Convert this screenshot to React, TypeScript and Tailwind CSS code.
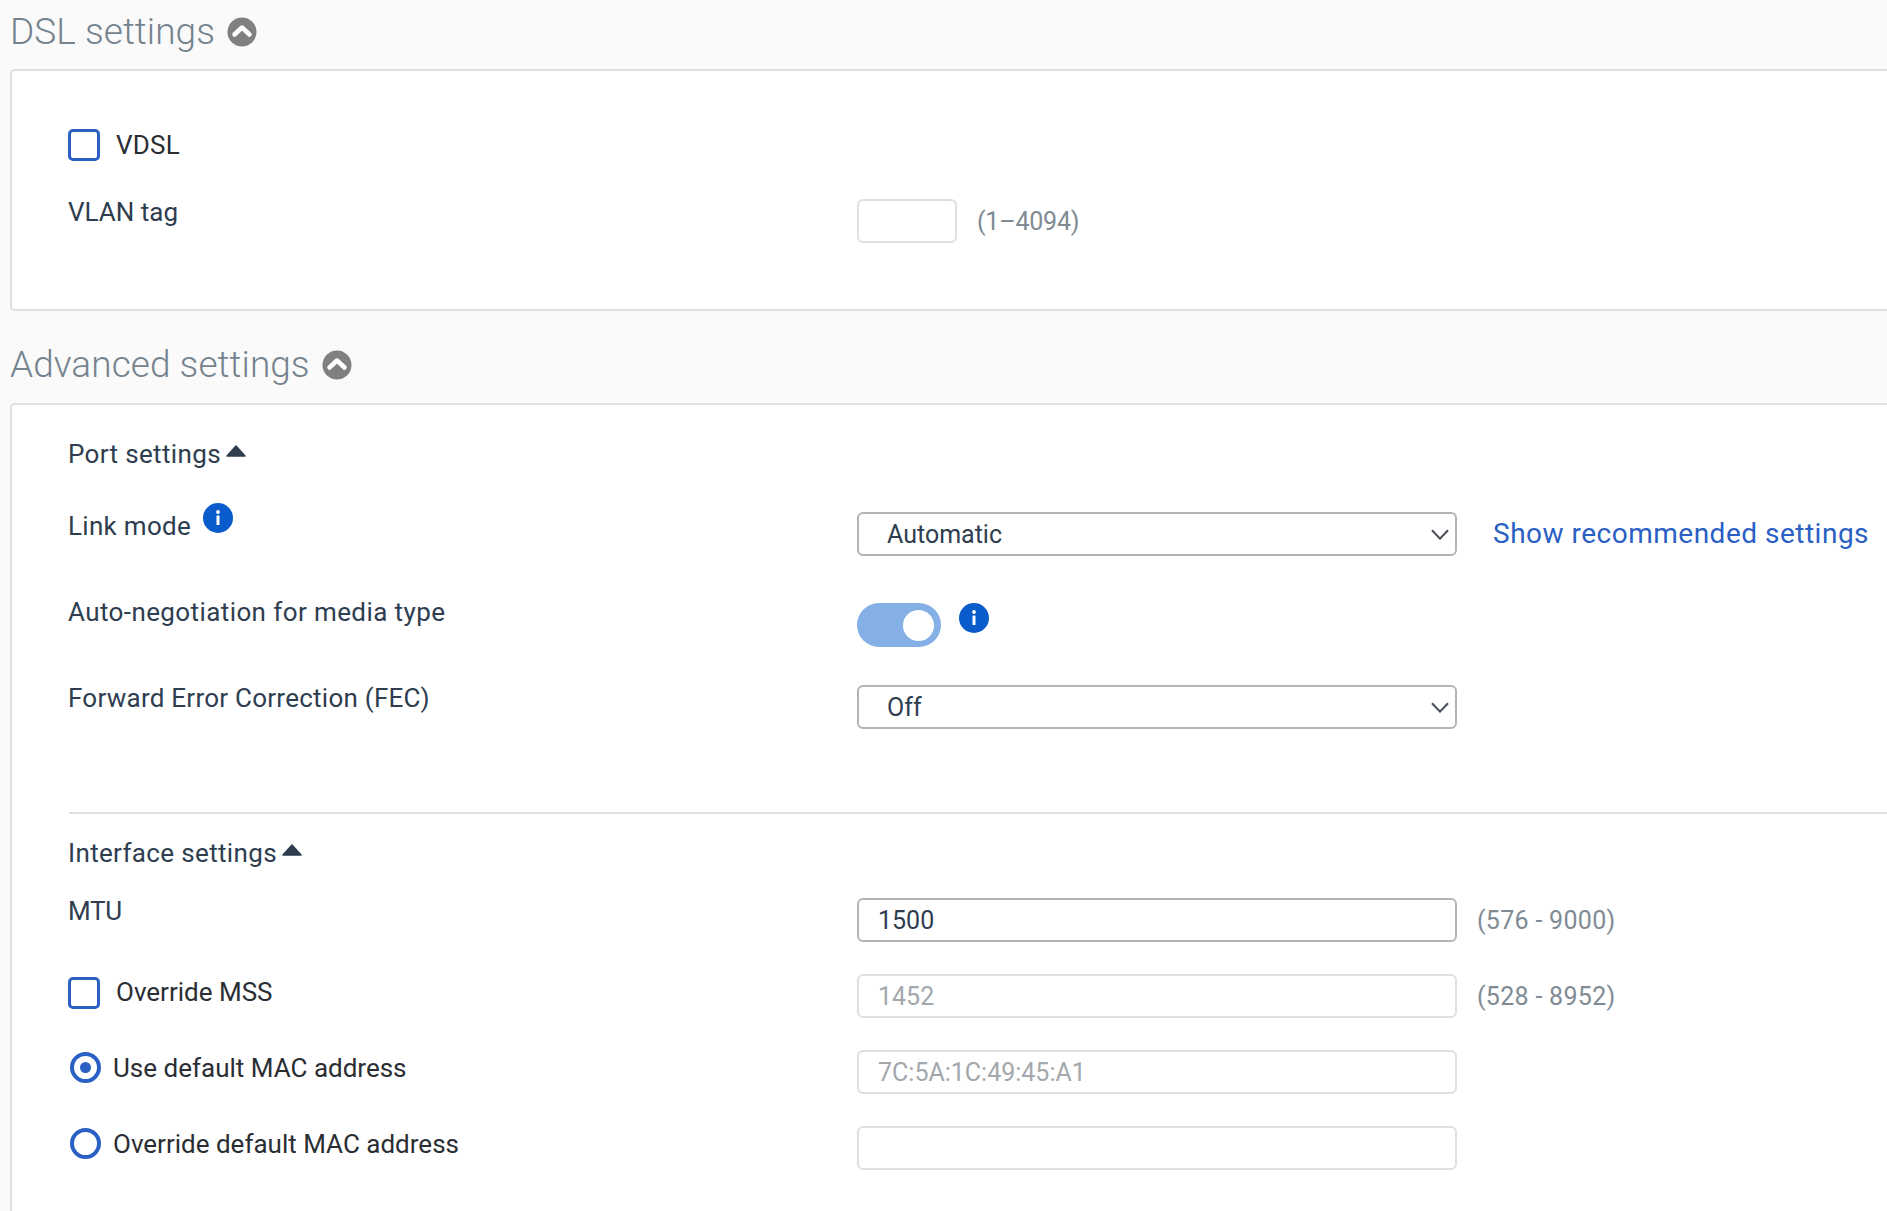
import type { ReactNode } from "react";

function ChevronCircle() {
  return (
    <svg width="30" height="30" viewBox="0 0 30 30" className="shrink-0">
      <circle cx="15" cy="15" r="14.5" fill="#808080" />
      <path d="M7.5 17.5 15 10.5l7.5 7" fill="none" stroke="#fff" strokeWidth="4.5" strokeLinecap="round" strokeLinejoin="round" />
    </svg>
  );
}

function InfoIcon() {
  return (
    <svg width="30" height="30" viewBox="0 0 30 30" className="shrink-0">
      <circle cx="15" cy="15" r="15" fill="#0a5bcc" />
      <circle cx="15" cy="9" r="1.9" fill="#fff" />
      <rect x="13.5" y="12.5" width="3" height="9.5" rx="0.6" fill="#fff" />
    </svg>
  );
}

function Caret() {
  return (
    <svg width="20" height="12" viewBox="0 0 20 12" className="ml-[5px] mt-[-6px] shrink-0">
      <path d="M10 1 19 11H1Z" fill="#2e3d4f" stroke="#2e3d4f" strokeWidth="1.5" strokeLinejoin="round" />
    </svg>
  );
}

function Chevron() {
  return (
    <svg width="18" height="11" viewBox="0 0 18 11" className="shrink-0">
      <path d="M1 1.2 9 9.6l8-8.4" fill="none" stroke="#454c54" strokeWidth="2" />
    </svg>
  );
}

function Heading({ title }: { title: string }) {
  return (
    <div className="flex h-[30px] items-center gap-[12px]">
      <span className="text-[37px] font-light leading-[30px] tracking-[0.05px] text-[#75838e]">{title}</span>
      <ChevronCircle />
    </div>
  );
}

function Checkbox() {
  return <div className="h-[32px] w-[32px] shrink-0 rounded-[5px] border-[3px] border-[#2a5fc4] bg-white" />;
}

function Radio({ on }: { on?: boolean }) {
  return (
    <div className="ml-[2px] mt-[2px] flex h-[31px] w-[31px] shrink-0 items-center justify-center rounded-full border-[4px] border-[#2a5fc4]">
      {on && <div className="h-[11px] w-[11px] rounded-full bg-[#2a5fc4]" />}
    </div>
  );
}

function Select({ value }: { value: string }) {
  return (
    <div className="flex h-[44px] w-[600px] items-center justify-between rounded-[6px] border-2 border-[#b0b5ba] bg-white pl-[28px] pr-[6px] text-[25px] text-[#2e3d4f]">
      <span className="pt-[2px] leading-[30px]">{value}</span>
      <Chevron />
    </div>
  );
}

function Input({ value, active }: { value?: string; active?: boolean }) {
  return (
    <div
      className={`flex h-[44px] w-[600px] items-center rounded-[6px] border-2 bg-white pl-[19px] pt-[2px] text-[25px] ${
        active ? "border-[#b0b5ba] text-[#2e3d4f]" : "border-[#dcdfe3] text-[#a3a8ad]"
      }`}
    >
      {value}
    </div>
  );
}

function Hint({ children, className = "tracking-[0.3px]" }: { children: ReactNode; className?: string }) {
  return <div className={`ml-[20px] flex h-[44px] items-center pt-[2px] text-[25px] text-[#808b94] ${className}`}>{children}</div>;
}

function Label({ children, className = "tracking-[0.4px]" }: { children: ReactNode; className?: string }) {
  return <div className={`text-[26px] leading-[26px] text-[#2e3d4f] ${className}`}>{children}</div>;
}

function Row({ left, children, className = "" }: { left: ReactNode; children?: ReactNode; className?: string }) {
  return (
    <div className={`flex items-start ${className}`}>
      <div className="flex w-[789px] shrink-0 items-start">{left}</div>
      {children}
    </div>
  );
}

function Toggle() {
  return (
    <div className="mt-[4px] flex h-[44px] w-[84px] items-center justify-end rounded-full bg-[#85b0e6] pr-[7px]">
      <div className="h-[31px] w-[31px] rounded-full bg-white" />
    </div>
  );
}

export default function App() {
  return (
    <div className="h-[1211px] overflow-hidden bg-[#fafafa] pl-[10px] pt-[17px] font-['Roboto',sans-serif]">
      <Heading title="DSL settings" />
      <section className="mt-[22px] h-[242px] rounded-l-[5px] border-2 border-r-0 border-[#e0e0e0] bg-white pl-[56px] pt-[58px]">
        <div className="flex h-[32px] items-center gap-[16px]">
          <Checkbox />
          <span className="text-[26px] leading-[28px] tracking-[0.2px] text-[#2a2e33]">VDSL</span>
        </div>
        <Row className="mt-[38px]" left={<Label className="tracking-[0px]">VLAN tag</Label>}>
          <div className="flex">
            <div className="h-[44px] w-[100px] rounded-[6px] border-2 border-[#dcdfe3] bg-white" />
            <Hint className="tracking-[-0.2px]">(1–4094)</Hint>
          </div>
        </Row>
      </section>

      <div className="mt-[39px]">
        <Heading title="Advanced settings" />
      </div>
      <section className="mt-[23px] h-[900px] rounded-l-[5px] border-2 border-b-0 border-r-0 border-[#e0e0e0] bg-white pl-[56px] pt-[36px]">
        <div className="flex h-[26px] items-center">
          <Label className="tracking-[0.35px]">Port settings</Label>
          <Caret />
        </div>
        <Row
          className="mt-[45px]"
          left={
            <div className="flex items-start">
              <Label className="mt-[1px] tracking-[0.3px]">Link mode</Label>
              <div className="ml-[12px] mt-[-9px]">
                <InfoIcon />
              </div>
            </div>
          }
        >
          <Select value="Automatic" />
          <a className="ml-[36px] mt-[4px] whitespace-nowrap text-[28px] leading-[36px] tracking-[0.5px] text-[#2a5fc4]">Show recommended settings</a>
        </Row>
        <Row className="mt-[43px]" left={<Label>Auto-negotiation for media type</Label>}>
          <Toggle />
          <div className="ml-[18px] mt-[4px]">
            <InfoIcon />
          </div>
        </Row>
        <Row className="mt-[38px]" left={<Label className="tracking-[0.25px]">Forward Error Correction (FEC)</Label>}>
          <Select value="Off" />
        </Row>
        <div className="ml-[1px] mt-[83px] h-[2px] bg-[#e0e0e0]" />
        <div className="mt-[26px] flex h-[26px] items-center">
          <Label className="tracking-[0.35px]">Interface settings</Label>
          <Caret />
        </div>
        <Row className="mt-[32px]" left={<Label className="tracking-[-0.3px]">MTU</Label>}>
          <Input value="1500" active />
          <Hint>(576 - 9000)</Hint>
        </Row>
        <Row
          className="mt-[32px]"
          left={
            <div className="flex items-center gap-[16px] pt-[3px]">
              <Checkbox />
              <span className="mb-[2px] text-[26px] leading-[26px] text-[#2a2e33]">Override MSS</span>
            </div>
          }
        >
          <Input value="1452" />
          <Hint>(528 - 8952)</Hint>
        </Row>
        <Row
          className="mt-[32px]"
          left={
            <div className="flex items-start gap-[12px]">
              <Radio on />
              <span className="mt-[4px] text-[26px] leading-[28px] text-[#2a2e33]">Use default MAC address</span>
            </div>
          }
        >
          <Input value="7C:5A:1C:49:45:A1" />
        </Row>
        <Row
          className="mt-[32px]"
          left={
            <div className="flex items-start gap-[12px]">
              <Radio />
              <span className="mt-[4px] text-[26px] leading-[28px] text-[#2a2e33]">Override default MAC address</span>
            </div>
          }
        >
          <Input />
        </Row>
      </section>
    </div>
  );
}
